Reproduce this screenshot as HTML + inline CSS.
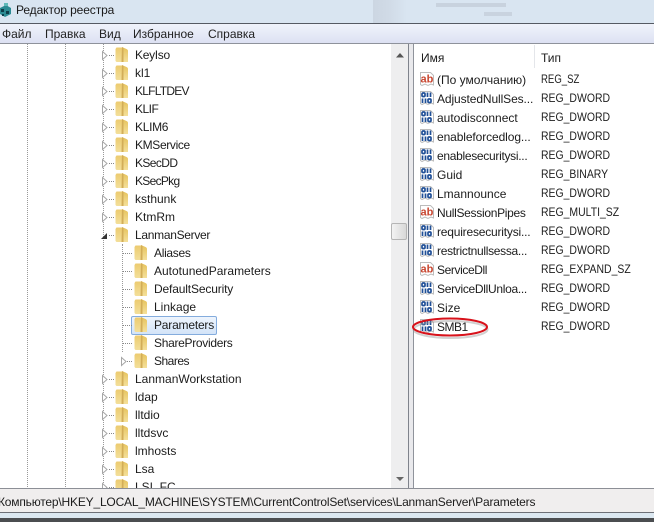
<!DOCTYPE html>
<html><head><meta charset="utf-8">
<style>
html,body{margin:0;padding:0}
body{width:654px;height:522px;overflow:hidden;position:relative;background:#fff;font-family:"Liberation Sans",sans-serif;font-size:12px;color:#1c1c1c}
div{position:absolute;white-space:nowrap}
.t{height:18px;line-height:18px}
.r{height:18px;line-height:18px;left:541px;transform:scaleX(.87);transform-origin:0 50%}
.m{top:25px;height:18px;line-height:18px;color:#222}
svg{position:absolute;overflow:visible}
</style></head><body>
<svg width="0" height="0" style="position:absolute"><defs>
<linearGradient id="g1" x1="0" y1="0" x2="0" y2="1"><stop offset="0" stop-color="#eccb70"/><stop offset="1" stop-color="#f3df9a"/></linearGradient>
<linearGradient id="g2" x1="0" y1="0" x2="0" y2="1"><stop offset="0" stop-color="#e6c25c"/><stop offset="1" stop-color="#f4e09a"/></linearGradient>
<g id="f"><path d="M0.500 2 L1.500 0.500 H7 V15 H1.500 L0.500 14 Z" fill="url(#g1)"/><path d="M7 0 L11.500 2 C12.500 2.500 13 3 13 4 V15 H6 Z" fill="url(#g2)"/><path d="M7 0 L8.500 1 V15 H6.500 Z" fill="#d2ad58"/></g>
<g id="e"><path d="M0.500 0.500 L5 4.500 L0.500 8.500 Z" fill="#fff" stroke="#a6a6a6"/></g>
<g id="ab"><path d="M1.500 0.500 H11.500 L14.500 3.500 V13 L12 12 L9 13.500 L6 12 L3 13.500 L1.500 12.500 Z" fill="#fff" stroke="#bcbcbc"/><text x="1.500" y="10.500" font-family="Liberation Sans" font-size="11" font-weight="bold" fill="#c8452f">ab</text></g>
<g id="b"><path d="M1.500 0.500 H11.500 L14.500 3.500 V13 L12 12 L9 13.500 L6 12 L3 13.500 L1.500 12.500 Z" fill="#fff" stroke="#bcbcbc"/>
<g fill="none" stroke="#1f4f96" stroke-width="1.700"><rect x="3" y="2" width="3" height="3.500" rx="1"/><path d="M8.500 1.500 V6 M11.500 1.500 V6 M3.500 7.500 V12 M6.500 7.500 V12"/><rect x="9" y="8" width="3" height="3.500" rx="1"/></g></g>
</defs></svg>

<!-- title bar -->
<div style="left:0;top:0;width:654px;height:23px;background:#d9e5f1"></div>
<div style="left:373px;top:0;width:34px;height:23px;background:linear-gradient(90deg,#ccd6e2,#d0dae6 45%,#d9e5f1)"></div>
<div style="left:436px;top:3px;width:70px;height:4px;background:#c8d2de"></div>
<div style="left:484px;top:12px;width:28px;height:4px;background:#c9d3df"></div>
<svg style="left:0;top:2px" width="14" height="16"><path d="M0 6 L6 3 L11 6 L11 12 L5 15 L0 12Z" fill="#2c8b93"/><path d="M1 7 h3 v3 h-3z M6 9 h3 v3 h-3z M2 12 h2 v2 h-2z" fill="#0d3e4a"/><path d="M4 1 h4 v3 h-4z" fill="#61b9b9"/></svg>
<div style="left:16px;top:1px;height:18px;line-height:18px;font-size:12px;letter-spacing:-.1px;color:#1a1a1a">Редактор реестра</div>
<div style="left:0;top:23px;width:654px;height:1px;background:#555a63"></div>

<!-- menu -->
<div style="left:0;top:24px;width:654px;height:20px;background:linear-gradient(#f0f3fb,#dce0f2)"></div>
<div class="m" style="left:2px">Файл</div>
<div class="m" style="left:45px">Правка</div>
<div class="m" style="left:99px">Вид</div>
<div class="m" style="left:133px">Избранное</div>
<div class="m" style="left:208px">Справка</div>
<div style="left:0;top:43px;width:654px;height:1px;background:#8e929b"></div>

<!-- panes -->
<div style="left:408px;top:44px;width:5px;height:445px;background:#e9e9ec"></div>
<div style="left:408px;top:44px;width:1px;height:445px;background:#7f838c"></div>
<div style="left:413px;top:44px;width:1px;height:445px;background:#8f939b"></div>

<!-- scrollbar -->
<div style="left:391px;top:44px;width:17px;height:445px;background:#eeeeef"></div>
<svg style="left:396px;top:53px" width="8" height="5"><path d="M0 4.500 L4 0 L8 4.500Z" fill="#555"/></svg>
<svg style="left:396px;top:477px" width="8" height="5"><path d="M0 0 L8 0 L4 4Z" fill="#666"/></svg>
<div style="left:391px;top:223px;width:14px;height:15px;border:1px solid #b5b5b5;border-radius:2px;background:linear-gradient(90deg,#f3f3f3,#d8d8d8)"></div>

<!-- dotted tree guides -->
<div style="left:27px;top:44px;height:445px;border-left:1px dotted #999"></div>
<div style="left:65px;top:44px;height:445px;border-left:1px dotted #999"></div>
<div style="left:103px;top:44px;height:445px;border-left:1px dotted #999"></div>
<div style="left:122px;top:244px;height:108px;border-left:1px dotted #999"></div>

<!-- selection -->
<div style="left:131px;top:316px;width:84px;height:17px;border:1px solid #84acdd;border-radius:2px;background:linear-gradient(#eef5fd,#d3e4f8)"></div>

<!-- tree rows -->
<svg style="left:0;top:0" width="400" height="489">
<g stroke="#888" stroke-dasharray="1 1" stroke-width="1">
<path d="M109 55.500h6M109 73.500h6M109 91.500h6M109 109.500h6M109 127.500h6M109 145.500h6M109 163.500h6M109 181.500h6M109 199.500h6M109 217.500h6M109 235.500h6M109 379.500h6M109 397.500h6M109 415.500h6M109 433.500h6M109 451.500h6M109 469.500h6M109 487.500h6"/>
<path d="M123 253.500h10M123 271.500h10M123 289.500h10M123 307.500h10M123 325.500h10M123 343.500h10M127 361.500h6"/>
</g>
<use href="#e" x="102" y="51"/><use href="#f" x="115" y="47"/>
<use href="#e" x="102" y="69"/><use href="#f" x="115" y="65"/>
<use href="#e" x="102" y="87"/><use href="#f" x="115" y="83"/>
<use href="#e" x="102" y="105"/><use href="#f" x="115" y="101"/>
<use href="#e" x="102" y="123"/><use href="#f" x="115" y="119"/>
<use href="#e" x="102" y="141"/><use href="#f" x="115" y="137"/>
<use href="#e" x="102" y="159"/><use href="#f" x="115" y="155"/>
<use href="#e" x="102" y="177"/><use href="#f" x="115" y="173"/>
<use href="#e" x="102" y="195"/><use href="#f" x="115" y="191"/>
<use href="#e" x="102" y="213"/><use href="#f" x="115" y="209"/>
<path d="M101 239 L107 239 L107 233 Z" fill="#333"/><use href="#f" x="115" y="227"/>
<use href="#f" x="134" y="245"/><use href="#f" x="134" y="263"/><use href="#f" x="134" y="281"/><use href="#f" x="134" y="299"/><use href="#f" x="134" y="317"/><use href="#f" x="134" y="335"/>
<use href="#e" x="121" y="357"/><use href="#f" x="134" y="353"/>
<use href="#e" x="102" y="375"/><use href="#f" x="115" y="371"/>
<use href="#e" x="102" y="393"/><use href="#f" x="115" y="389"/>
<use href="#e" x="102" y="411"/><use href="#f" x="115" y="407"/>
<use href="#e" x="102" y="429"/><use href="#f" x="115" y="425"/>
<use href="#e" x="102" y="447"/><use href="#f" x="115" y="443"/>
<use href="#e" x="102" y="465"/><use href="#f" x="115" y="461"/>
<use href="#e" x="102" y="483"/><use href="#f" x="115" y="479"/>
</svg>
<div class="t" style="left:135px;top:46px;letter-spacing:-.3px">KeyIso</div>
<div class="t" style="left:135px;top:64px">kl1</div>
<div class="t" style="left:135px;top:82px;letter-spacing:-.75px">KLFLTDEV</div>
<div class="t" style="left:135px;top:100px;letter-spacing:-.5px">KLIF</div>
<div class="t" style="left:135px;top:118px;letter-spacing:-.3px">KLIM6</div>
<div class="t" style="left:135px;top:136px;letter-spacing:-.35px">KMService</div>
<div class="t" style="left:135px;top:154px;letter-spacing:-.6px">KSecDD</div>
<div class="t" style="left:135px;top:172px;letter-spacing:-.7px">KSecPkg</div>
<div class="t" style="left:135px;top:190px">ksthunk</div>
<div class="t" style="left:135px;top:208px">KtmRm</div>
<div class="t" style="left:135px;top:226px;letter-spacing:-.3px">LanmanServer</div>
<div class="t" style="left:154px;top:244px;letter-spacing:-.3px">Aliases</div>
<div class="t" style="left:154px;top:262px">AutotunedParameters</div>
<div class="t" style="left:154px;top:280px;letter-spacing:-.15px">DefaultSecurity</div>
<div class="t" style="left:154px;top:298px">Linkage</div>
<div class="t" style="left:154px;top:316px;letter-spacing:-.2px">Parameters</div>
<div class="t" style="left:154px;top:334px;letter-spacing:-.3px">ShareProviders</div>
<div class="t" style="left:154px;top:352px;letter-spacing:-.5px">Shares</div>
<div class="t" style="left:135px;top:370px">LanmanWorkstation</div>
<div class="t" style="left:135px;top:388px">ldap</div>
<div class="t" style="left:135px;top:406px">lltdio</div>
<div class="t" style="left:135px;top:424px">lltdsvc</div>
<div class="t" style="left:135px;top:442px">lmhosts</div>
<div class="t" style="left:135px;top:460px">Lsa</div>
<div class="t" style="left:135px;top:478px">LSI_FC</div>

<!-- list header -->
<div style="left:534px;top:45px;width:1px;height:23px;background:#e4e6ea"></div>
<div class="t" style="left:421px;top:49px">Имя</div>
<div class="t" style="left:541px;top:49px">Тип</div>

<!-- list rows -->
<svg style="left:0;top:0" width="654" height="489">
<use href="#ab" x="419" y="72"/><use href="#b" x="419" y="91"/><use href="#b" x="419" y="110"/><use href="#b" x="419" y="129"/><use href="#b" x="419" y="148"/><use href="#b" x="419" y="167"/><use href="#b" x="419" y="186"/><use href="#ab" x="419" y="205"/><use href="#b" x="419" y="224"/><use href="#b" x="419" y="243"/><use href="#ab" x="419" y="262"/><use href="#b" x="419" y="281"/><use href="#b" x="419" y="300"/><use href="#b" x="419" y="319"/>
</svg>
<div class="t" style="left:437px;top:71px">(По умолчанию)</div><div class="r" style="top:70px;transform:scaleX(.8)">REG_SZ</div>
<div class="t" style="left:437px;top:90px;letter-spacing:-.1px">AdjustedNullSes...</div><div class="r" style="top:89px">REG_DWORD</div>
<div class="t" style="left:437px;top:109px">autodisconnect</div><div class="r" style="top:108px">REG_DWORD</div>
<div class="t" style="left:437px;top:128px;letter-spacing:-.1px">enableforcedlog...</div><div class="r" style="top:127px">REG_DWORD</div>
<div class="t" style="left:437px;top:147px;letter-spacing:-.3px">enablesecuritysi...</div><div class="r" style="top:146px">REG_DWORD</div>
<div class="t" style="left:437px;top:166px">Guid</div><div class="r" style="top:165px">REG_BINARY</div>
<div class="t" style="left:437px;top:185px">Lmannounce</div><div class="r" style="top:184px">REG_DWORD</div>
<div class="t" style="left:437px;top:204px;letter-spacing:-.3px">NullSessionPipes</div><div class="r" style="top:203px">REG_MULTI_SZ</div>
<div class="t" style="left:437px;top:223px;letter-spacing:-.2px">requiresecuritysi...</div><div class="r" style="top:222px">REG_DWORD</div>
<div class="t" style="left:437px;top:242px;letter-spacing:-.3px">restrictnullsessa...</div><div class="r" style="top:241px">REG_DWORD</div>
<div class="t" style="left:437px;top:261px;letter-spacing:-.4px">ServiceDll</div><div class="r" style="top:260px">REG_EXPAND_SZ</div>
<div class="t" style="left:437px;top:280px;letter-spacing:-.3px">ServiceDllUnloa...</div><div class="r" style="top:279px">REG_DWORD</div>
<div class="t" style="left:437px;top:299px">Size</div><div class="r" style="top:298px">REG_DWORD</div>
<div class="t" style="left:437px;top:318px;letter-spacing:-.5px">SMB1</div><div class="r" style="top:317px">REG_DWORD</div>

<!-- red ellipse -->
<svg style="left:0;top:0" width="654" height="489">
<ellipse cx="450.500" cy="329.500" rx="37" ry="8.500" fill="none" stroke="#999" stroke-width="2" opacity=".45"/>
<ellipse cx="450" cy="327" rx="37" ry="8.500" fill="none" stroke="#d8121b" stroke-width="2"/>
</svg>

<!-- status bar -->
<div style="left:0;top:488px;width:654px;height:1px;background:#8c8f96"></div>
<div style="left:0;top:489px;width:654px;height:23px;background:#f0eeee"></div>
<div style="left:-2px;top:493px;height:18px;line-height:18px;color:#1c1c1c;letter-spacing:-.19px">Компьютер\HKEY_LOCAL_MACHINE\SYSTEM\CurrentControlSet\services\LanmanServer\Parameters</div>
<div style="left:0;top:512px;width:654px;height:1px;background:#6d7077"></div>
<div style="left:0;top:513px;width:654px;height:5px;background:#dce8f1"></div>
<div style="left:0;top:518px;width:654px;height:4px;background:#4b4d50"></div>
</body></html>
